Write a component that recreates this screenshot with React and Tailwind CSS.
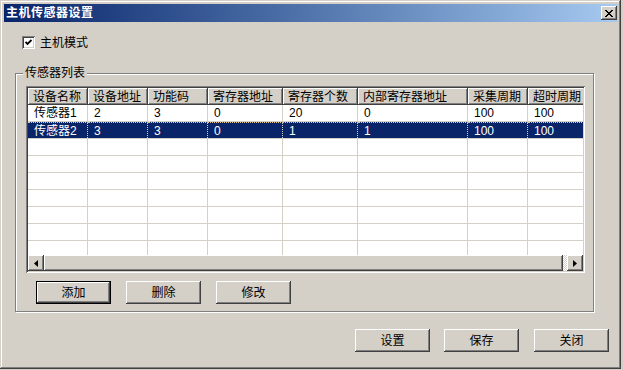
import React from 'react';

const raised = 'shadow-[inset_-1px_-1px_#404040,inset_1px_1px_#ffffff,inset_-2px_-2px_#808080,inset_2px_2px_#d4d0c8]';
const sunken = 'shadow-[inset_1px_1px_#808080,inset_-1px_-1px_#ffffff,inset_2px_2px_#404040,inset_-2px_-2px_#d4d0c8]';

const columns = [
  { title: '设备名称', w: 'w-[60px]' },
  { title: '设备地址', w: 'w-[60px]' },
  { title: '功能码', w: 'w-[60px]' },
  { title: '寄存器地址', w: 'w-[75px]' },
  { title: '寄存器个数', w: 'w-[75px]' },
  { title: '内部寄存器地址', w: 'w-[110px]' },
  { title: '采集周期', w: 'w-[60px]' },
  { title: '超时周期', w: 'w-[60px]' },
];

const rows = [
  ['传感器1', '2', '3', '0', '20', '0', '100', '100'],
  ['传感器2', '3', '3', '0', '1', '1', '100', '100'],
];

const emptyRows = 7;

function Button({ children, isDefault }) {
  if (isDefault) {
    return (
      <div className="w-[75px] h-[23px] border border-black bg-[#d4d0c8]">
        <div className={`w-full h-full flex items-center justify-center text-[12px] text-black ${raised}`}>
          {children}
        </div>
      </div>
    );
  }
  return (
    <div className={`w-[75px] h-[23px] flex items-center justify-center text-[12px] text-black bg-[#d4d0c8] ${raised}`}>
      {children}
    </div>
  );
}

function Arrow({ dir }) {
  return (
    <svg width="4" height="7" viewBox="0 0 4 7">
      {dir === 'left'
        ? <polygon points="4,0 4,7 0,3.5" fill="#000" />
        : <polygon points="0,0 0,7 4,3.5" fill="#000" />}
    </svg>
  );
}

function ListView() {
  return (
    <div className={`w-[559px] h-[187px] p-[2px] bg-white ${sunken}`}>
      <div className="w-[555px] h-[183px] flex flex-col overflow-hidden">
        {/* header */}
        <div className="flex h-[17px] shrink-0">
          {columns.map((c) => (
            <div
              key={c.title}
              className={`${c.w} shrink-0 h-[17px] bg-[#d4d0c8] pl-[5px] flex items-center text-[12px] text-black whitespace-nowrap ${raised}`}
            >
              {c.title}
            </div>
          ))}
        </div>
        {/* rows */}
        <div className="h-[150px] flex flex-col overflow-hidden">
          {rows.map((r, i) => {
            const selected = i === 1;
            return (
              <div
                key={i}
                className={`flex h-[17px] shrink-0 border-b border-[#d4d0c8] ${selected ? 'bg-[#0a246a] text-white' : 'bg-white text-black'}`}
              >
                {r.map((v, j) => (
                  <div
                    key={j}
                    className={`${columns[j].w} shrink-0 h-full pl-[6px] border-r border-[#d4d0c8] flex items-center text-[12px] whitespace-nowrap ${selected ? 'border-t border-dotted border-t-[#e9c888]' : ''}`}
                  >
                    {v}
                  </div>
                ))}
              </div>
            );
          })}
          {Array.from({ length: emptyRows }).map((_, i) => (
            <div key={i} className="flex h-[17px] shrink-0 border-b border-[#d4d0c8] bg-white">
              {columns.map((c) => (
                <div key={c.title} className={`${c.w} shrink-0 h-full border-r border-[#d4d0c8]`} />
              ))}
            </div>
          ))}
        </div>
        {/* horizontal scrollbar */}
        <div className="flex h-[16px] shrink-0 bg-[#d4d0c8]">
          <div className={`w-[16px] h-[16px] flex items-center justify-center ${raised}`}>
            <Arrow dir="left" />
          </div>
          <div className={`w-[519px] h-[16px] ${raised}`} />
          <div className="w-[4px] h-[16px] bg-[repeating-conic-gradient(#d4d0c8_0_25%,#ffffff_0_50%)] bg-[length:2px_2px]" />
          <div className={`w-[16px] h-[16px] flex items-center justify-center ${raised}`}>
            <Arrow dir="right" />
          </div>
        </div>
      </div>
    </div>
  );
}

export default function App() {
  return (
    <div
      className="w-[623px] h-[370px] bg-[#d4d0c8] overflow-hidden"
      style={{ fontFamily: '"Liberation Sans", "Noto Sans CJK SC", sans-serif' }}
    >
      <div className="w-[621px] h-[369px] bg-[#d4d0c8] pt-[4px] pl-[4px] pr-[3px] shadow-[inset_-1px_-1px_#404040,inset_1px_1px_#d4d0c8,inset_-2px_-2px_#808080,inset_2px_2px_#ffffff] flex flex-col">
        {/* title bar */}
        <div className="h-[18px] bg-gradient-to-r from-[#0a246a] to-[#a6caf0] flex items-center justify-between pl-[2px] pr-[1px]">
          <span className="text-white font-bold text-[12px] tracking-[0.5px]">主机传感器设置</span>
          <div className={`w-[16px] h-[14px] bg-[#d4d0c8] flex items-center justify-center ${raised}`}>
            <svg width="8" height="7" viewBox="0 0 8 7" shapeRendering="crispEdges">
              <path d="M0 0h2v1h-2z M6 0h2v1h-2z M1 1h2v1h-2z M5 1h2v1h-2z M2 2h4v1h-4z M3 3h2v1h-2z M2 4h4v1h-4z M1 5h2v1h-2z M5 5h2v1h-2z M0 6h2v1h-2z M6 6h2v1h-2z" fill="#000" />
            </svg>
          </div>
        </div>

        {/* host mode checkbox */}
        <div className="mt-[14px] ml-[18px] flex items-center gap-[5px] h-[13px]">
          <div className={`w-[13px] h-[13px] bg-white flex items-center justify-center ${sunken}`}>
            <svg width="7" height="7" viewBox="0 0 7 7">
              <polyline points="0.5,3 2.5,5 6.5,1" fill="none" stroke="#000" strokeWidth="1.8" />
            </svg>
          </div>
          <span className="text-[12px] text-black">主机模式</span>
        </div>

        {/* group box */}
        <div className="relative mt-[24px] ml-[11px] w-[579px] h-[239px] border border-[#808080] shadow-[inset_1px_1px_#ffffff,1px_1px_#ffffff] pt-[12px] pl-[10px]">
          <span className="absolute left-[7px] top-[-9px] px-[2px] bg-[#d4d0c8] text-[12px] text-black leading-[16px]">
            传感器列表
          </span>
          <ListView />
          <div className="mt-[8px] ml-[10px] flex gap-[15px]">
            <Button isDefault>添加</Button>
            <Button>删除</Button>
            <Button>修改</Button>
          </div>
        </div>

        {/* bottom buttons */}
        <div className="mt-[17px] mr-[9px] flex justify-end">
          <div className="flex">
            <Button>设置</Button>
            <div className="w-[14px]" />
            <Button>保存</Button>
            <div className="w-[15px]" />
            <Button>关闭</Button>
          </div>
        </div>
      </div>
    </div>
  );
}
